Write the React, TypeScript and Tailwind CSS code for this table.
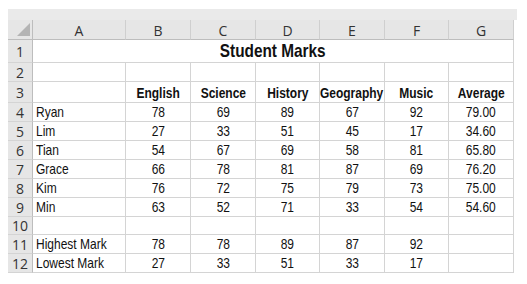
import React from "react";

/* ── Sheet data ─────────────────────────────────────────────── */

const letters = ["A", "B", "C", "D", "E", "F", "G"];

type Row = { n: number; h: string; cells: string[]; bold?: boolean };

const rows: Row[] = [
  { n: 2, h: "h-[19px]", cells: ["", "", "", "", "", "", ""] },
  { n: 3, h: "h-[21px]", cells: ["", "English", "Science", "History", "Geography", "Music", "Average"], bold: true },
  { n: 4, h: "h-[19px]", cells: ["Ryan", "78", "69", "89", "67", "92", "79.00"] },
  { n: 5, h: "h-[19px]", cells: ["Lim", "27", "33", "51", "45", "17", "34.60"] },
  { n: 6, h: "h-[19px]", cells: ["Tian", "54", "67", "69", "58", "81", "65.80"] },
  { n: 7, h: "h-[19px]", cells: ["Grace", "66", "78", "81", "87", "69", "76.20"] },
  { n: 8, h: "h-[19px]", cells: ["Kim", "76", "72", "75", "79", "73", "75.00"] },
  { n: 9, h: "h-[19px]", cells: ["Min", "63", "52", "71", "33", "54", "54.60"] },
  { n: 10, h: "h-[18px]", cells: ["", "", "", "", "", "", ""] },
  { n: 11, h: "h-[19px]", cells: ["Highest Mark", "78", "78", "89", "87", "92", ""] },
  { n: 12, h: "h-[19px]", cells: ["Lowest Mark", "27", "33", "51", "33", "17", ""] },
];

const cols = "grid grid-cols-[25px_93px_65px_65px_64px_65px_64px_65px]";

/* ── Pieces ─────────────────────────────────────────────────── */

function RowNum({ n, h }: { n: number; h: string }) {
  return (
    <div
      className={`${h} flex items-center justify-center bg-[#e6e6e6] border-r border-b border-r-[#bdbdbd] border-b-[#d4d4d4] text-[14px] text-[#333] font-['Open_Sans','Liberation_Sans',sans-serif]`}
    >
      {n}
    </div>
  );
}

export default function App() {
  return (
    <div className="min-h-screen bg-white pt-[9px] pl-[8px]">
      {/* toolbar strip above the column headers */}
      <div className="h-[11px] w-[509px] bg-[#eaeaea]" />

      <div className={`${cols} w-[506px] font-['Liberation_Sans',Arial,sans-serif] text-[#111]`}>
        {/* ── Column headers ─────────────────────────────── */}
        <div className="h-[20px] bg-[#e6e6e6] border-r border-b border-[#bdbdbd] flex items-end justify-end pr-[2px] pb-[3px]">
          <svg width="13" height="13" viewBox="0 0 13 13">
            <polygon points="13,0 13,13 0,13" fill="#b4b4b4" />
          </svg>
        </div>
        {letters.map((l) => (
          <div
            key={l}
            className="h-[20px] bg-[#e6e6e6] border-r border-b border-r-[#cfcfcf] border-b-[#bdbdbd] flex items-center justify-center pt-[2px] text-[14px] text-[#333] font-['Open_Sans','Liberation_Sans',sans-serif]"
          >
            {l}
          </div>
        ))}

        {/* ── Title row ──────────────────────────────────── */}
        <RowNum n={1} h="h-[23px]" />
        <div className="col-span-7 h-[23px] border-r border-b border-[#d4d4d4] flex items-center justify-center text-[18.5px] font-bold">
          <span className="inline-block scale-x-[0.83] whitespace-nowrap">Student Marks</span>
        </div>

        {/* ── Body ───────────────────────────────────────── */}
        {rows.map((r) => (
          <React.Fragment key={r.n}>
            <RowNum n={r.n} h={r.h} />
            {r.cells.map((c, i) => (
              <div
                key={i}
                className={`${r.h} border-r border-b border-[#d4d4d4] flex items-center whitespace-nowrap ${
                  i === 0 ? "justify-start pl-[3px]" : "justify-center"
                } ${r.bold ? "text-[15px] font-bold pt-[3px]" : "text-[15px]"}`}
              >
                <span className={`inline-block scale-x-[0.8] ${i === 0 ? "origin-left" : "origin-center"}`}>
                  {c}
                </span>
              </div>
            ))}
          </React.Fragment>
        ))}
      </div>
    </div>
  );
}
